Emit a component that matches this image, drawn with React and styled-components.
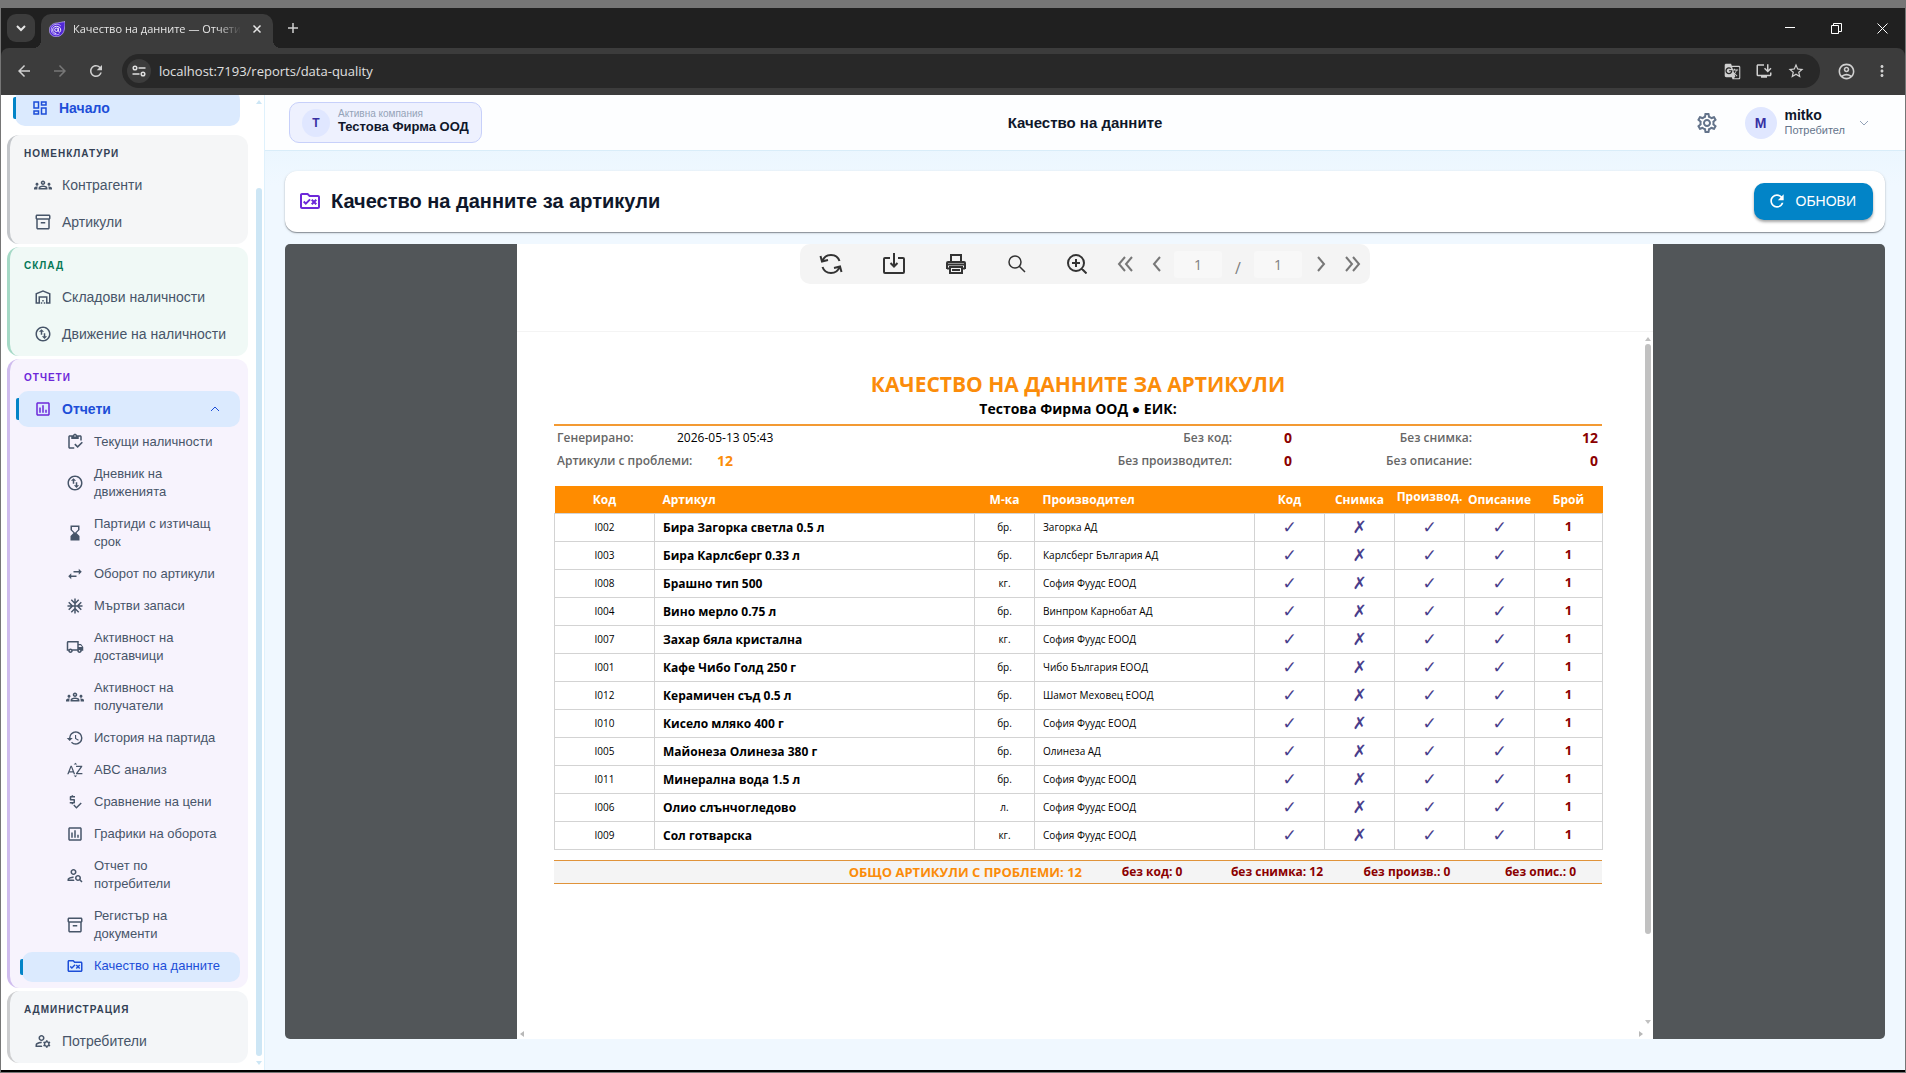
import React from 'react';
import styled, { createGlobalStyle, css } from 'styled-components';
import {
    MdOutlineDashboard,
    MdOutlineGroups,
    MdOutlineInventory2,
    MdOutlineWarehouse,
    MdOutlineSwapVerticalCircle,
    MdOutlineAssessment,
    MdOutlineInventory,
    MdHourglassBottom,
    MdSwapHoriz,
    MdAcUnit,
    MdOutlineLocalShipping,
    MdHistory,
    MdSortByAlpha,
    MdPriceCheck,
    MdOutlinePersonSearch,
    MdOutlineRuleFolder,
    MdOutlineManageAccounts,
    MdOutlineSettings,
    MdRefresh,
    MdGTranslate,
    MdOutlineInstallDesktop,
    MdStarBorder,
    MdOutlineAccountCircle,
    MdMoreVert,
    MdArrowBack,
    MdArrowForward,
} from 'react-icons/md';

const uiFont = '"Liberation Sans", Arial, sans-serif';
const reportFont = '"Open Sans", "Noto Sans", sans-serif';

const GlobalStyle = createGlobalStyle`
    * { box-sizing: border-box; }

    body {
        margin: 0;
        background: #767676;
        font-family: ${uiFont};
    }

    button, input {
        font: inherit;
        color: inherit;
        border: 0;
        padding: 0;
        margin: 0;
        background: none;
    }

    a { text-decoration: none; color: inherit; }
    svg { display: block; flex: none; }
`;

const Window = styled.div`
    height: 100vh;
    display: flex;
    flex-direction: column;
    overflow: hidden;
    border: 1px solid #767676;
    border-top-width: 8px;
    background: #202020;
`;

/* browser chrome */

const TabStrip = styled.div`
    height: 40px;
    flex: none;
    display: flex;
    align-items: flex-end;
    padding-left: 6px;
    color: #e6e6e6;
`;

const TabSearch = styled.button`
    width: 28px;
    height: 28px;
    margin-bottom: 6px;
    border-radius: 9px;
    background: #3c3c3c;
    display: grid;
    place-items: center;
`;

const Tab = styled.div`
    position: relative;
    width: 232px;
    height: 34px;
    margin-left: 6px;
    padding: 0 8px 5px;
    border-radius: 10px 10px 0 0;
    background: #3c3c3c;
    display: flex;
    align-items: center;
    gap: 8px;

    /* flared feet of the active tab */
    &::before,
    &::after {
        content: '';
        position: absolute;
        bottom: 0;
        width: 8px;
        height: 8px;
    }

    &::before {
        left: -8px;
        background: radial-gradient(circle at 0 0, transparent 8px, #3c3c3c 8px);
    }

    &::after {
        right: -8px;
        background: radial-gradient(circle at 100% 0, transparent 8px, #3c3c3c 8px);
    }
`;

const TabTitle = styled.span`
    flex: 1;
    min-width: 0;
    overflow: hidden;
    white-space: nowrap;
    font: 11px/20px ${reportFont};
    mask-image: linear-gradient(to right, #000 86%, transparent);
`;

const ChromeButton = styled.button`
    width: ${props => props.$width || 24}px;
    height: 28px;
    color: ${props => props.$color || '#d0d0d0'};
    display: grid;
    place-items: center;
`;

const NewTab = styled(ChromeButton)`
    margin: 0 0 6px 8px;
`;

const WindowButtons = styled.div`
    margin-left: auto;
    height: 100%;
    display: flex;
    align-items: center;
    color: #fff;
`;

const AddressBar = styled.div`
    height: 47px;
    flex: none;
    display: flex;
    align-items: center;
    padding: 0 11px 1px;
    border-radius: 8px 8px 0 0;
    background: #3c3c3c;
`;

const NavButtons = styled.div`
    display: flex;
    gap: 12px;
    margin-right: 14px;
`;

const Omnibox = styled.div`
    flex: 1;
    height: 34px;
    display: flex;
    align-items: center;
    padding: 0 12px 0 5px;
    border-radius: 17px;
    background: #282828;
    color: #e0e0e0;
`;

const SiteInfo = styled.button`
    width: 24px;
    height: 24px;
    border-radius: 50%;
    background: #3c3c3c;
    display: grid;
    place-items: center;
    margin-right: 8px;
`;

const Url = styled.input`
    flex: 1;
    min-width: 0;
    font: 13px/20px ${reportFont};
    outline: 0;
`;

const OmniActions = styled.div`
    display: flex;
    gap: 8px;
`;

const ChromeEnd = styled.div`
    display: flex;
    gap: 12px;
    margin-left: 14px;
`;

/* page */

const Page = styled.div`
    flex: 1;
    min-height: 0;
    display: flex;
    background: #f0f8ff;
    border-bottom: 2px solid #000;
`;

const Sidebar = styled.aside`
    width: 264px;
    flex: none;
    display: flex;
    background: #fff;
    border-right: 1px solid #dff1fc;
`;

/* the menu rests at the end of its scroll range */
const Menu = styled.nav`
    flex: 1;
    display: flex;
    flex-direction: column;
    justify-content: flex-end;
    gap: 3px;
    overflow: hidden;
    padding: 0 8px 7px 6px;
`;

const Group = styled.section`
    flex: none;
    display: flex;
    flex-direction: column;
    gap: 1px;
    padding: 0 8px ${props => props.$bottom || 4}px 6px;
    border-left: 3px solid ${props => props.$edge};
    border-radius: 12px;
    background: ${props => props.$bg};
`;

const GroupTitle = styled.h2`
    margin: 0;
    padding: 8px 0 0 8px;
    height: 31px;
    font-size: 10px;
    line-height: 22px;
    font-weight: 700;
    letter-spacing: 1px;
    color: ${props => props.$color};
`;

const active = css`
    position: relative;
    background: #dbeafe;
    color: #1d4ed8;

    &::before {
        content: '';
        position: absolute;
        left: -2px;
        top: 7px;
        bottom: 7px;
        width: 3px;
        border-radius: 2px 0 0 2px;
        background: #0284c7;
    }
`;

const Item = styled.a`
    flex: none;
    height: 36px;
    display: flex;
    align-items: center;
    gap: 10px;
    padding: 0 20px 0 ${props => (props.$active ? 16 : 18)}px;
    margin-left: ${props => (props.$active ? 2 : 0)}px;
    border-radius: 10px;
    font-size: 14px;
    line-height: 20px;
    white-space: nowrap;
    color: #475569;
    ${props => props.$active && active}
    ${props => props.$active && 'font-weight: 700;'}

    svg:last-child:not(:first-child) { margin-left: auto; }
`;

const HomeItem = styled(Item)`
    padding-left: 16px;
    margin: 0 8px 6px 8px;
`;

const SubMenu = styled.div`
    display: flex;
    flex-direction: column;
    gap: 2px;
`;

const SubItem = styled.a`
    display: flex;
    align-items: center;
    gap: 10px;
    margin-left: 6px;
    padding: 5px 8px 7px 44px;
    border-radius: 10px;
    font-size: 13px;
    line-height: 18px;
    color: #475569;
    ${props => props.$active && active}
`;

const SubLabel = styled.span`
    max-width: 128px;
`;

const ScrollTrack = styled.div`
    flex: none;
    width: ${props => props.$width}px;
    padding: 5px 2px 3px 0;
    display: flex;
    flex-direction: column;
    align-items: flex-end;
    color: ${props => props.$color};
`;

const Thumb = styled.div`
    width: 6px;
    flex: 1;
    margin: ${props => props.$margin};
    border-radius: 3px;
    background: currentColor;
`;

const Main = styled.main`
    flex: 1;
    min-width: 0;
    display: flex;
    flex-direction: column;
    background: linear-gradient(#e4f4fe, #f0f8ff 90px);
`;

const TopBar = styled.header`
    height: 56px;
    flex: none;
    display: grid;
    grid-template-columns: 1fr auto 1fr;
    align-items: center;
    padding: 0 24px;
    background: #fdfeff;
    border-bottom: 1px solid #d9edf9;
`;

const Company = styled.div`
    justify-self: start;
    height: 41px;
    display: flex;
    align-items: center;
    gap: 8px;
    padding: 0 12px;
    border: 1px solid #c7d0fa;
    border-radius: 10px;
    background: #eef1fe;
`;

const Avatar = styled.span`
    width: ${props => props.$size}px;
    height: ${props => props.$size}px;
    border-radius: 50%;
    background: #e0e7ff;
    color: #3730a3;
    display: grid;
    place-items: center;
    font-size: ${props => (props.$size > 30 ? 14 : 12)}px;
    font-weight: 700;
`;

const Stack = styled.div`
    display: flex;
    flex-direction: column;
    text-align: left;
    padding-bottom: 2px;
`;

const CompanyHint = styled.span`
    font-size: 10px;
    line-height: 11px;
    color: #94a3b8;
`;

const Strong = styled.strong`
    font-size: ${props => props.$size || 14}px;
    line-height: 16px;
    color: #0f172a;
`;

const PageName = styled.h1`
    margin: 0;
    font-size: 15px;
    line-height: 20px;
    color: #0f172a;
`;

const Account = styled.div`
    justify-self: end;
    display: flex;
    align-items: center;
    gap: 26px;
    margin-right: 12px;
    color: #64748b;
`;

const UserButton = styled.button`
    display: flex;
    align-items: center;
    gap: 8px;
    color: #94a3b8;
`;

const Role = styled.span`
    font-size: 11px;
    line-height: 14px;
    color: #64748b;
    margin-right: 6px;
`;

const Content = styled.div`
    flex: 1;
    min-height: 0;
    display: flex;
    flex-direction: column;
    gap: 12px;
    padding: 20px 20px 31px;
`;

const HeadCard = styled.section`
    height: 61px;
    flex: none;
    display: flex;
    align-items: center;
    gap: 9px;
    padding: 0 12px 1px 13px;
    border-radius: 12px;
    background: #fff;
    box-shadow: 0 1px 1px #8b9299, 0 1px 3px rgba(0, 0, 0, 0.15);
    color: #6d28d9;
`;

const CardTitle = styled.h2`
    margin: 0;
    font-size: 20px;
    line-height: 28px;
    color: #0f172a;
`;

const RefreshButton = styled.button`
    margin-left: auto;
    height: 37px;
    display: flex;
    align-items: center;
    gap: 9px;
    padding: 0 17px 0 13px;
    border-radius: 10px;
    background: #0284c7;
    color: #fff;
    font-size: 14px;
    box-shadow: 0 2px 3px rgba(0, 0, 0, 0.35);
`;

/* report viewer */

const Viewer = styled.section`
    flex: 1;
    min-height: 0;
    display: flex;
    justify-content: center;
    border-radius: 5px;
    background: #525659;
`;

const Sheet = styled.div`
    width: 71%;
    display: flex;
    flex-direction: column;
    background: #fff;
    font-family: ${reportFont};
`;

const ToolArea = styled.div`
    height: 88px;
    flex: none;
    display: flex;
    justify-content: center;
    align-items: flex-start;
    border-bottom: 1px solid #f4f4f4;
`;

const Tools = styled.div`
    width: 570px;
    height: 40px;
    display: flex;
    align-items: center;
    border-radius: 10px;
    background: #f4f4f4;
    color: #808080;
`;

const Tool = styled.button`
    flex: none;
    width: ${props => props.$width}px;
    height: 100%;
    display: grid;
    place-items: center;
    color: ${props => (props.$dim ? '#777' : '#333')};
`;

const PageInput = styled.input`
    width: 48px;
    height: 27px;
    border-radius: 3px;
    background: #f8f8f8;
    text-align: center;
    font-size: 14px;
`;

const Slash = styled.span`
    width: 32px;
    text-align: center;
    font-size: 16px;
    line-height: 20px;
    padding-top: 8px;
`;

const Scroller = styled.div`
    flex: 1;
    min-height: 0;
    display: flex;
`;

const Report = styled.article`
    flex: 1;
    min-width: 0;
    padding: 37px 37px 0;
    color: #000;
`;

const ReportTitle = styled.h3`
    margin: 0;
    text-align: center;
    font-size: 21px;
    line-height: 30px;
    color: #fb8c0a;
`;

const ReportCompany = styled.p`
    margin: 0;
    padding-bottom: 5px;
    text-align: center;
    font-size: 14px;
    line-height: 20px;
    font-weight: 700;
    border-bottom: 2px solid #f39a33;
`;

const Meta = styled.dl`
    margin: 0;
    padding: 0 4px 0 3px;
    display: grid;
    grid-template-columns: 120px 240px 5fr 112px 128px 2fr;
    grid-auto-rows: 23px;
    line-height: 23px;
    font-size: 12px;
`;

const MetaLabel = styled.dt`
    font-weight: 600;
    color: #666;
    text-align: ${props => props.$align || 'left'};
    white-space: nowrap;
`;

const MetaValue = styled.dd`
    margin: 0;
    text-align: ${props => props.$align || 'left'};
    padding-left: ${props => props.$indent || 0}px;
    ${props => props.$color && `
        font-size: 14px;
        font-weight: 700;
        color: ${props.$color};
    `}
`;

const Grid = styled.table`
    width: 100%;
    margin-top: 14px;
    border-collapse: collapse;
    table-layout: fixed;
    font-size: 10px;
    line-height: 15px;
`;

const Th = styled.th`
    height: 27px;
    padding: 0 ${props => (props.$left ? 8 : 0)}px ${props => (props.$raised ? 6 : 0)}px;
    text-align: ${props => (props.$left ? 'left' : 'center')};
    font-size: 12px;
    font-weight: 700;
    background: #ff8c00;
    color: #fff;
`;

const Td = styled.td`
    height: 28px;
    padding: 0 ${props => (props.$left ? 8 : 0)}px;
    text-align: ${props => (props.$left ? 'left' : 'center')};
    border: 1px solid #d3d3d3;
    white-space: nowrap;
    ${props => props.$bold && 'font-size: 12px; font-weight: 700;'}
`;

const Mark = styled.span`
    font: 17px/20px "DejaVu Sans", sans-serif;
    color: #483d8b;
`;

const Count = styled.span`
    font-size: 13px;
    font-weight: 700;
    color: #8b0000;
`;

const Totals = styled.div`
    margin-top: 10px;
    height: 24px;
    display: grid;
    grid-template-columns: 1fr 140px 110px 150px 117px;
    align-items: center;
    padding-right: 3px;
    text-align: center;
    border: solid #e0933a;
    border-width: 1px 0;
    background: #f4f4f4;
    font-size: 12px;
    font-weight: 700;
    color: #8b0000;
    white-space: nowrap;
`;

const TotalMain = styled.strong`
    text-align: right;
    font-size: 13px;
    font-weight: 700;
    color: #fb8c0a;
`;

const BottomTrack = styled.div`
    height: 10px;
    flex: none;
    display: flex;
    align-items: center;
    justify-content: space-between;
    padding: 0 10px 0 3px;
    color: #b8b8b8;
`;

const reportItems = [
    ['Текущи наличности', MdOutlineInventory],
    ['Дневник на движенията', MdOutlineSwapVerticalCircle],
    ['Партиди с изтичащ срок', MdHourglassBottom],
    ['Оборот по артикули', MdSwapHoriz],
    ['Мъртви запаси', MdAcUnit],
    ['Активност на доставчици', MdOutlineLocalShipping],
    ['Активност на получатели', MdOutlineGroups],
    ['История на партида', MdHistory],
    ['ABC анализ', MdSortByAlpha],
    ['Сравнение на цени', MdPriceCheck],
    ['Графики на оборота', MdOutlineAssessment],
    ['Отчет по потребители', MdOutlinePersonSearch],
    ['Регистър на документи', MdOutlineInventory2],
    ['Качество на данните', MdOutlineRuleFolder],
];

const articles = [
    ['I002', 'Бира Загорка светла 0.5 л', 'бр.', 'Загорка АД'],
    ['I003', 'Бира Карлсберг 0.33 л', 'бр.', 'Карлсберг България АД'],
    ['I008', 'Брашно тип 500', 'кг.', 'София Фуудс ЕООД'],
    ['I004', 'Вино мерло 0.75 л', 'бр.', 'Винпром Карнобат АД'],
    ['I007', 'Захар бяла кристална', 'кг.', 'София Фуудс ЕООД'],
    ['I001', 'Кафе Чибо Голд 250 г', 'бр.', 'Чибо България ЕООД'],
    ['I012', 'Керамичен съд 0.5 л', 'бр.', 'Шамот Меховец ЕООД'],
    ['I010', 'Кисело мляко 400 г', 'бр.', 'София Фуудс ЕООД'],
    ['I005', 'Майонеза Олинеза 380 г', 'бр.', 'Олинеза АД'],
    ['I011', 'Минерална вода 1.5 л', 'бр.', 'София Фуудс ЕООД'],
    ['I006', 'Олио слънчогледово', 'л.', 'София Фуудс ЕООД'],
    ['I009', 'Сол готварска', 'кг.', 'София Фуудс ЕООД'],
];

const columnWidths = [100, 320, 60, 220, 70, 70, 70, 70, 68];

// Stroked line icon; `d` may hold several sub paths
const Line = ({ d, size = 16, box = 16, width = 2 }) => (
    <svg width={size} height={size} viewBox={`0 0 ${box} ${box}`} fill="none" stroke="currentColor" strokeWidth={width}>
        <path d={d} />
    </svg>
);

const arrows = {
    up: 'M0 4 3 0 6 4z',
    down: 'M0 0 3 4 6 0z',
    left: 'M4 0 0 3 4 6z',
    right: 'M2 0 6 3 2 6z',
};

const Arrow = ({ to }) => (
    <svg width="6" height="6" viewBox="0 0 6 6" fill="currentColor">
        <path d={arrows[to]} />
    </svg>
);

const Favicon = () => (
    <svg width="16" height="16" viewBox="0 0 16 16">
        <path d="M15.800.2C15.300.8 14.800 1 14 .9 13 .7 12.500 1.500 11.500 1.400 10.500 1.200 10 1.900 9 1.900 4 1.800.3 4.700.3 9c0 4 3 6.700 6.700 6.700 4.300 0 7.300-2.600 8.200-6.700.5-2.500 1-5.500.6-8.800z" fill="#5127d5" stroke="#d9ccff" strokeWidth=".6" />
        <path d="M11.800 4.900C10.600 3.600 9 3.200 7.200 3.300 4 3.500 2.200 5.900 2.200 8.900c0 3 2.200 4.900 5 4.900 1.300 0 2.400-.3 3.300-.9" fill="none" stroke="#c9b8ff" strokeWidth=".9" />
        <path d="M9.300 6.600v3.600c0 1.500 2.200 1.400 2.400-.9.200-2.500-1.700-4-4.300-4-2.100 0-3.700 1.600-3.700 3.700 0 2.100 1.600 3.500 3.600 3.500" fill="none" stroke="#fff" strokeWidth=".9" />
        <circle cx="7.400" cy="8.800" r="1.700" fill="none" stroke="#fff" strokeWidth=".9" />
    </svg>
);

const TuneIcon = () => (
    <svg width="14" height="14" viewBox="0 0 14 14" fill="none" stroke="currentColor" strokeWidth="1.500">
        <circle cx="3" cy="4" r="1.800" />
        <circle cx="11" cy="10" r="1.800" />
        <path d="M6.500 4h7M.5 10h7" />
    </svg>
);

const DownloadIcon = () => (
    <Line size={22} box={22} d="M7 5H2a1 1 0 0 0-1 1v13a1 1 0 0 0 1 1h18a1 1 0 0 0 1-1V6a1 1 0 0 0-1-1h-5M11 0v13M7.500 10 11 13.500 14.500 10" />
);

const PrintIcon = () => (
    <Line size={20} box={20} d="M5 7V1h10v6M1 15V9a1 1 0 0 1 1-1h16a1 1 0 0 1 1 1v6M1 10.500h18M4 13h12v6H4zM6 16h8M1 14.500h3M16 14.500h3" />
);

const SyncIcon = () => (
    <Line size={24} box={24} d="M3.500 9A9 9 0 0 1 20.500 9M1.500 4l1.500 5.500L9 8M20.500 15A9 9 0 0 1 3.500 15M22.500 20 21 14.500 15 16" />
);

const Navigation = () => (
    <Sidebar>
        <Menu>
            <HomeItem href="#home" $active>
                <MdOutlineDashboard size={18} />
                Начало
            </HomeItem>
            <Group $bg="#f5f6f7" $edge="#c3c6ca">
                <GroupTitle $color="#334155">НОМЕНКЛАТУРИ</GroupTitle>
                <Item href="#partners"><MdOutlineGroups size={18} />Контрагенти</Item>
                <Item href="#articles"><MdOutlineInventory2 size={18} />Артикули</Item>
            </Group>
            <Group $bg="#f0f9f6" $edge="#a5d9c6">
                <GroupTitle $color="#047857">СКЛАД</GroupTitle>
                <Item href="#stock"><MdOutlineWarehouse size={18} />Складови наличности</Item>
                <Item href="#movement"><MdOutlineSwapVerticalCircle size={18} />Движение на наличности</Item>
            </Group>
            <Group $bg="#f7f3fd" $edge="#cfbcee" $bottom={6}>
                <GroupTitle $color="#6d28d9">ОТЧЕТИ</GroupTitle>
                <Item href="#reports" $active>
                    <MdOutlineAssessment size={18} color="#6d28d9" />
                    Отчети
                    <Line size={10} box={10} width={1} d="M1 7 5 3 9 7" />
                </Item>
                <SubMenu>
                    {reportItems.map(([label, Icon], i) => (
                        <SubItem key={label} href={`#report-${i}`} $active={i === reportItems.length - 1}>
                            <Icon size={18} />
                            <SubLabel>{label}</SubLabel>
                        </SubItem>
                    ))}
                </SubMenu>
            </Group>
            <Group $bg="#f4f6f8" $edge="#cccdcf">
                <GroupTitle $color="#334155">АДМИНИСТРАЦИЯ</GroupTitle>
                <Item href="#users"><MdOutlineManageAccounts size={18} />Потребители</Item>
            </Group>
        </Menu>
        <ScrollTrack $width={8} $color="#cde6f5">
            <Arrow to="up" />
            <Thumb $margin="82px 0 5px" />
            <Arrow to="down" />
        </ScrollTrack>
    </Sidebar>
);

const BrowserBar = () => (
    <>
        <TabStrip>
            <TabSearch aria-label="Търсене в раздели"><Line size={12} box={12} d="M2 4l4 4 4-4" /></TabSearch>
            <Tab>
                <Favicon />
                <TabTitle>Качество на данните — Отчети</TabTitle>
                <ChromeButton aria-label="Затвори раздела" $width={16} $color="#e6e6e6">
                    <Line size={10} box={10} width={1.5} d="M1.500 1.500l7 7M8.500 1.500l-7 7" />
                </ChromeButton>
            </Tab>
            <NewTab aria-label="Нов раздел"><Line size={12} box={12} width={1.5} d="M6 1v10M1 6h10" /></NewTab>
            <WindowButtons>
                <ChromeButton aria-label="Намали" $width={46} $color="#fff"><Line size={10} box={10} width={1} d="M0 4.500h10" /></ChromeButton>
                <ChromeButton aria-label="Възстанови" $width={46} $color="#fff"><Line size={11} box={11} width={1} d="M.5 2.500h7v8h-7zM2.500 2.500v-2h8v8h-3" /></ChromeButton>
                <ChromeButton aria-label="Затвори" $width={46} $color="#fff"><Line size={11} box={11} width={1} d="M.5.5l10 10M10.500.5l-10 10" /></ChromeButton>
            </WindowButtons>
        </TabStrip>
        <AddressBar>
            <NavButtons>
                <ChromeButton aria-label="Назад"><MdArrowBack size={18} /></ChromeButton>
                <ChromeButton aria-label="Напред" $color="#777"><MdArrowForward size={18} /></ChromeButton>
                <ChromeButton aria-label="Презареди"><MdRefresh size={18} /></ChromeButton>
            </NavButtons>
            <Omnibox>
                <SiteInfo aria-label="Информация за сайта"><TuneIcon /></SiteInfo>
                <Url aria-label="Адрес" defaultValue="localhost:7193/reports/data-quality" />
                <OmniActions>
                    <ChromeButton aria-label="Преведи"><MdGTranslate size={17} /></ChromeButton>
                    <ChromeButton aria-label="Инсталирай"><MdOutlineInstallDesktop size={18} /></ChromeButton>
                    <ChromeButton aria-label="Отметка"><MdStarBorder size={18} /></ChromeButton>
                </OmniActions>
            </Omnibox>
            <ChromeEnd>
                <ChromeButton aria-label="Профил"><MdOutlineAccountCircle size={19} /></ChromeButton>
                <ChromeButton aria-label="Меню"><MdMoreVert size={18} /></ChromeButton>
            </ChromeEnd>
        </AddressBar>
    </>
);

const ReportTools = () => (
    <Tools>
        <Tool aria-label="Обнови" $width={62}><SyncIcon /></Tool>
        <Tool aria-label="Експорт" $width={63}><DownloadIcon /></Tool>
        <Tool aria-label="Печат" $width={62}><PrintIcon /></Tool>
        <Tool aria-label="Търсене" $width={60}>
            <Line size={18} box={18} width={1.5} d="M7 1a6 6 0 1 0 0 12A6 6 0 1 0 7 1M11.500 11.500l5.500 5.500" />
        </Tool>
        <Tool aria-label="Увеличи" $width={60}>
            <Line size={20} box={20} d="M9 1a8 8 0 1 0 0 16A8 8 0 1 0 9 1M14.500 14.500l5 5M9 5v8M5 9h8" />
        </Tool>
        <Tool aria-label="Първа" $width={35} $dim><Line size={16} box={16} d="M8 1 2 8l6 7M15 1 9 8l6 7" /></Tool>
        <Tool aria-label="Предишна" $width={32} $dim><Line size={16} box={16} d="M10 1 4 8l6 7" /></Tool>
        <PageInput aria-label="Страница" defaultValue="1" />
        <Slash>/</Slash>
        <PageInput aria-label="Общо страници" defaultValue="1" readOnly />
        <Tool aria-label="Следваща" $width={36} $dim><Line size={16} box={16} d="M6 1l6 7-6 7" /></Tool>
        <Tool aria-label="Последна" $width={30} $dim><Line size={16} box={16} d="M1 1l6 7-6 7M8 1l6 7-6 7" /></Tool>
    </Tools>
);

const ReportBody = () => (
    <Report>
        <ReportTitle>КАЧЕСТВО НА ДАННИТЕ ЗА АРТИКУЛИ</ReportTitle>
        <ReportCompany>Тестова Фирма ООД ● ЕИК:</ReportCompany>
        <Meta>
            <MetaLabel>Генерирано:</MetaLabel>
            <MetaValue>2026-05-13 05:43</MetaValue>
            <MetaLabel $align="right">Без код:</MetaLabel>
            <MetaValue $align="center" $color="#8b0000">0</MetaValue>
            <MetaLabel $align="right">Без снимка:</MetaLabel>
            <MetaValue $align="right" $color="#8b0000">12</MetaValue>
            <MetaLabel>Артикули с проблеми:</MetaLabel>
            <MetaValue $indent={40} $color="#fb8c0a">12</MetaValue>
            <MetaLabel $align="right">Без производител:</MetaLabel>
            <MetaValue $align="center" $color="#8b0000">0</MetaValue>
            <MetaLabel $align="right">Без описание:</MetaLabel>
            <MetaValue $align="right" $color="#8b0000">0</MetaValue>
        </Meta>
        <Grid>
            <colgroup>
                {columnWidths.map((w, i) => <col key={i} width={w} />)}
            </colgroup>
            <thead>
                <tr>
                    <Th>Код</Th>
                    <Th $left>Артикул</Th>
                    <Th>М-ка</Th>
                    <Th $left>Производител</Th>
                    <Th>Код</Th>
                    <Th>Снимка</Th>
                    <Th $raised>Производ.</Th>
                    <Th>Описание</Th>
                    <Th>Брой</Th>
                </tr>
            </thead>
            <tbody>
                {articles.map(([code, name, unit, maker]) => (
                    <tr key={code}>
                        <Td>{code}</Td>
                        <Td $left $bold>{name}</Td>
                        <Td>{unit}</Td>
                        <Td $left>{maker}</Td>
                        <Td><Mark>✓</Mark></Td>
                        <Td><Mark>✗</Mark></Td>
                        <Td><Mark>✓</Mark></Td>
                        <Td><Mark>✓</Mark></Td>
                        <Td><Count>1</Count></Td>
                    </tr>
                ))}
            </tbody>
        </Grid>
        <Totals>
            <TotalMain>ОБЩО АРТИКУЛИ С ПРОБЛЕМИ: 12</TotalMain>
            <span>без код: 0</span>
            <span>без снимка: 12</span>
            <span>без произв.: 0</span>
            <span>без опис.: 0</span>
        </Totals>
    </Report>
);

const App = () => (
    <Window>
        <GlobalStyle />
        <BrowserBar />
        <Page>
            <Navigation />
            <Main>
                <TopBar>
                    <Company>
                        <Avatar $size={28}>Т</Avatar>
                        <Stack>
                            <CompanyHint>Активна компания</CompanyHint>
                            <Strong $size={13}>Тестова Фирма ООД</Strong>
                        </Stack>
                    </Company>
                    <PageName>Качество на данните</PageName>
                    <Account>
                        <button aria-label="Настройки"><MdOutlineSettings size={24} /></button>
                        <UserButton>
                            <Avatar $size={32}>M</Avatar>
                            <Stack>
                                <Strong>mitko</Strong>
                                <Role>Потребител</Role>
                            </Stack>
                            <Line size={10} box={10} width={1} d="M1 3l4 4 4-4" />
                        </UserButton>
                    </Account>
                </TopBar>
                <Content>
                    <HeadCard>
                        <MdOutlineRuleFolder size={24} />
                        <CardTitle>Качество на данните за артикули</CardTitle>
                        <RefreshButton><MdRefresh size={20} />ОБНОВИ</RefreshButton>
                    </HeadCard>
                    <Viewer>
                        <Sheet>
                            <ToolArea><ReportTools /></ToolArea>
                            <Scroller>
                                <ReportBody />
                                <ScrollTrack $width={14} $color="#c1c1c1">
                                    <Arrow to="up" />
                                    <Thumb $margin="1px 0 86px" />
                                    <Arrow to="down" />
                                </ScrollTrack>
                            </Scroller>
                            <BottomTrack>
                                <Arrow to="left" />
                                <Arrow to="right" />
                            </BottomTrack>
                        </Sheet>
                    </Viewer>
                </Content>
            </Main>
        </Page>
    </Window>
);

export default App;
